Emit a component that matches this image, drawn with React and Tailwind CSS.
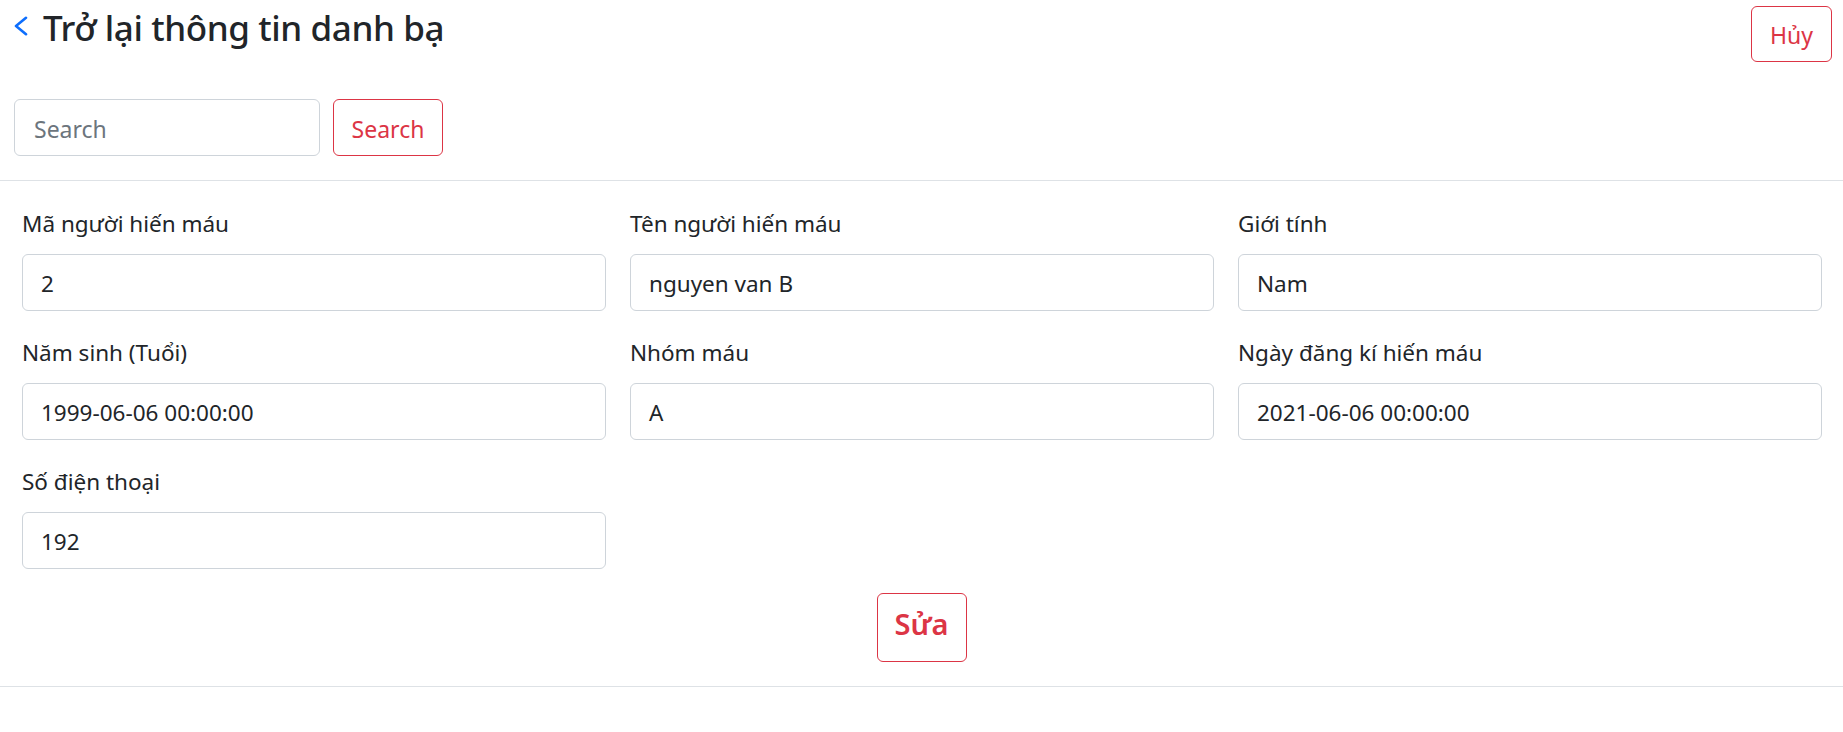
import React from "react";

const fields = [
  { label: "Mã người hiến máu", value: "2" },
  { label: "Tên người hiến máu", value: "nguyen van B" },
  { label: "Giới tính", value: "Nam" },
  { label: "Năm sinh (Tuổi)", value: "1999-06-06 00:00:00" },
  { label: "Nhóm máu", value: "A" },
  { label: "Ngày đăng kí hiến máu", value: "2021-06-06 00:00:00" },
  { label: "Số điện thoại", value: "192" },
];

export default function App() {
  return (
    <div className="w-[1843px] h-[732px] bg-white text-[#212529] font-['Segoe_UI','Noto_Sans',sans-serif] overflow-hidden">
      <div className="flex justify-between pl-[14px] pr-[11px] pt-[6px]">
        <div className="flex items-start -mt-[6px]">
          <svg width="14" height="20" viewBox="0 0 14 20" className="mt-[16px]" fill="none">
            <polyline points="12,1.8 2,10 12,18.2" stroke="#0d6efd" strokeWidth="2.6" strokeLinecap="round" strokeLinejoin="round" />
          </svg>
          <h1 className="ml-[15px] text-[35px] tracking-[-0.4px] leading-[50px] font-medium mt-[3px]">Trở lại thông tin danh bạ</h1>
        </div>
        <button className="h-[56px] w-[81px] border border-[#dc3545] rounded-[6px] text-[#dc3545] text-[23px] flex items-center justify-center pt-[3px]">
          Hủy
        </button>
      </div>

      <div className="flex gap-[13px] pl-[14px] mt-[37px]">
        <div className="h-[57px] w-[306px] border border-[#ced4da] rounded-[6px] px-[19px] pt-[3px] flex items-center text-[23px] text-[#6c757d]">
          Search
        </div>
        <button className="h-[57px] w-[110px] border border-[#dc3545] rounded-[6px] text-[#dc3545] text-[23px] flex items-center justify-center pt-[3px]">
          Search
        </button>
      </div>

      <div className="mt-[24px] border-t border-[#dee2e6]" />

      <div className="grid grid-cols-3 gap-x-[24px] pl-[22px] pr-[21px] pt-[25px]">
        {fields.map((f) => (
          <div key={f.label} className="mb-[24px]">
            <div className="text-[22.5px] leading-[36px] mb-[12px]">{f.label}</div>
            <div className="h-[57px] border border-[#ced4da] rounded-[6px] px-[18px] pt-[2px] flex items-center text-[22.5px]">
              {f.value}
            </div>
          </div>
        ))}
      </div>

      <div className="flex justify-center">
        <button className="h-[69px] w-[90px] border border-[#dc3545] rounded-[6px] text-[#dc3545] text-[29px] font-semibold flex items-center justify-center pb-[8px]">
          Sửa
        </button>
      </div>

      <div className="mt-[24px] border-t border-[#dee2e6]" />
    </div>
  );
}
